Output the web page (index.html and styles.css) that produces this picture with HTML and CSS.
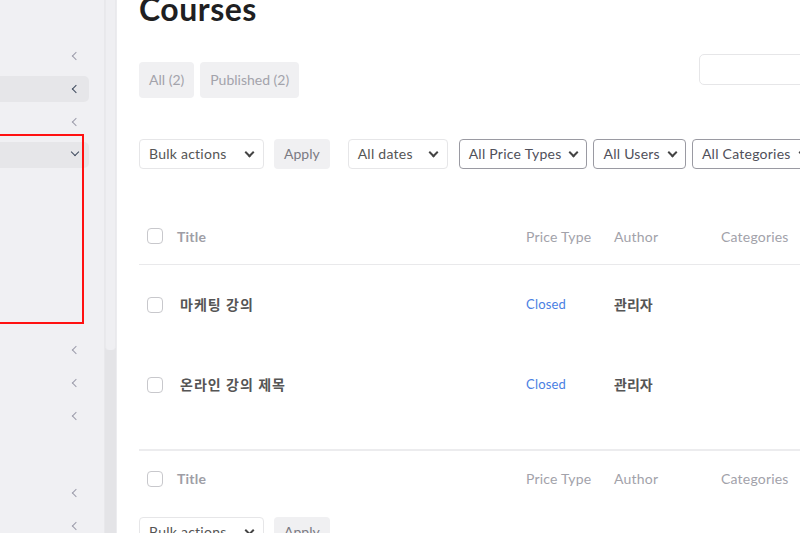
FILE: index.html
```html
<!DOCTYPE html>
<html lang="ko">
<head>
<meta charset="utf-8">
<title>Courses</title>
<link rel="stylesheet" href="styles.css">
</head>
<body>
<aside class="sidebar">
  <nav class="menu">
    <div class="item"><span class="chev"></span></div>
    <div class="item active"><span class="chev dark"></span></div>
    <div class="item"><span class="chev"></span></div>
    <div class="item active open"><span class="chev down"></span></div>
    <div class="submenu"></div>
    <div class="item"><span class="chev"></span></div>
    <div class="item"><span class="chev"></span></div>
    <div class="item"><span class="chev"></span></div>
    <div class="sep"></div>
    <div class="item"><span class="chev"></span></div>
    <div class="item"><span class="chev"></span></div>
  </nav>
  <div class="highlight-box"></div>
</aside>
<div class="scrollbar"><div class="thumb"></div></div>
<main class="content">
  <h1 class="title">Courses</h1>
  <div class="top-row">
    <div class="views">
      <a class="pill">All (2)</a>
      <a class="pill">Published (2)</a>
    </div>
    <div class="search"></div>
  </div>
  <div class="toolbar">
    <div class="select light w-bulk">Bulk actions<span class="dd"></span></div>
    <div class="btn">Apply</div>
    <div class="select light w-dates gap-l">All dates<span class="dd"></span></div>
    <div class="select dark gap-l">All Price Types<span class="dd"></span></div>
    <div class="select dark">All Users<span class="dd"></span></div>
    <div class="select dark">All Categories<span class="dd"></span></div>
  </div>
  <div class="table">
    <div class="row head">
      <div class="c-cb"><span class="cb"></span></div>
      <div class="c-title">Title</div>
      <div class="c-price">Price Type</div>
      <div class="c-author">Author</div>
      <div class="c-cat">Categories</div>
    </div>
    <div class="row body">
      <div class="c-cb"><span class="cb"></span></div>
      <div class="c-title strong ko">마케팅 강의</div>
      <div class="c-price link">Closed</div>
      <div class="c-author strong">관리자</div>
      <div class="c-cat"></div>
    </div>
    <div class="row body">
      <div class="c-cb"><span class="cb"></span></div>
      <div class="c-title strong ko">온라인 강의 제목</div>
      <div class="c-price link">Closed</div>
      <div class="c-author strong">관리자</div>
      <div class="c-cat"></div>
    </div>
    <div class="row head foot">
      <div class="c-cb"><span class="cb"></span></div>
      <div class="c-title">Title</div>
      <div class="c-price">Price Type</div>
      <div class="c-author">Author</div>
      <div class="c-cat">Categories</div>
    </div>
  </div>
  <div class="toolbar bottom">
    <div class="select light w-bulk">Bulk actions<span class="dd"></span></div>
    <div class="btn">Apply</div>
  </div>
</main>
</body>
</html>
```

FILE: styles.css
```css
* { box-sizing: border-box; }
html, body { margin: 0; padding: 0; }
body {
  width: 800px;
  height: 533px;
  overflow: hidden;
  display: flex;
  background: #fff;
  font-family: Lato, "Noto Sans CJK KR", sans-serif;
  color: #555;
}
.sidebar {
  position: relative;
  width: 104px;
  flex: none;
  background: #f0f0f3;
  height: 533px;
}
.menu {
  display: flex;
  flex-direction: column;
  padding-top: 43px;
  width: 89px;
}
.item {
  height: 26px;
  margin-bottom: 7px;
  border-radius: 0 5px 5px 0;
  position: relative;
}
.item.active { background: #e6e6e9; }
.submenu { height: 162px; }
.sep { height: 44px; }
.chev {
  position: absolute;
  right: 10px;
  top: 10px;
  width: 6px;
  height: 6px;
  border-left: 1.5px solid #9c9cab;
  border-bottom: 1.5px solid #9c9cab;
  transform: rotate(45deg);
}
.chev.dark { border-color: #3e4a5e; }
.chev.down {
  transform: rotate(-45deg);
  top: 7px;
  right: 11px;
  border-color: #3e4a5e;
}
.highlight-box {
  position: absolute;
  left: -4px;
  top: 134px;
  width: 88px;
  height: 190px;
  border: 2px solid #ff1010;
}
.scrollbar {
  width: 13px;
  flex: none;
  background: #e4e4e7;
  border-left: 1px solid #e8e8eb;
  border-right: 1px solid #ececef;
}
.thumb {
  height: 350px;
  background: #efeff2;
  border-left: 1px solid #e9e9ec;
  border-right: 1px solid #e9e9ec;
  border-radius: 0 0 4px 4px;
}
.content {
  flex: none;
  width: 700px;
  padding-left: 22px;
}
.title {
  margin: -11px 0 0;
  font-size: 32px;
  line-height: 40px;
  font-weight: 700;
  color: #1f1f22;
  letter-spacing: 0.5px;
}
.top-row {
  display: flex;
  justify-content: space-between;
  align-items: flex-start;
  margin-top: 33px;
  width: 680px;
}
.views { display: flex; gap: 6px; }
.pill {
  height: 36px;
  line-height: 36px;
  padding: 0 10px;
  background: #f0f0f2;
  border-radius: 4px;
  color: #a3a3ab;
  font-size: 14px;
}
.search {
  width: 120px;
  height: 31px;
  margin-top: -8px;
  border: 1px solid #e6e6e8;
  border-radius: 5px;
}
.toolbar {
  display: flex;
  gap: 6px;
  margin-top: 41px;
  height: 30px;
  white-space: nowrap;
}
.select {
  height: 30px;
  line-height: 28px;
  border-radius: 4px;
  padding: 0 10px 0 9px;
  font-size: 14px;
  color: #555;
  display: flex;
  align-items: center;
  justify-content: space-between;
  gap: 12px;
  flex: none;
  letter-spacing: 0.25px;
}
.select.light { border: 1px solid #e6e6e8; }
.select.dark {
  border: 1px solid #9a9aa2;
  gap: 9px;
  padding: 0 9px 0 9px;
  color: #50505a;
}
.w-bulk { width: 125px; }
.w-dates { width: 100px; }
.gap-l { margin-left: 12px; }
.select.dark.gap-l { margin-left: 5px; }
.dd {
  width: 7px;
  height: 7px;
  border-right: 2px solid #444;
  border-bottom: 2px solid #444;
  transform: rotate(45deg);
  margin-top: -4px;
  flex: none;
}
.btn {
  height: 30px;
  line-height: 30px;
  padding: 0 10px;
  margin-left: 4px;
  background: #f0f0f2;
  border-radius: 4px;
  color: #7a7a82;
  font-size: 14px;
}
.table {
  margin-top: 39px;
  margin-left: 0;
  width: 680px;
}
.row {
  display: flex;
  align-items: center;
}
.row.head {
  height: 57px;
  border-bottom: 1px solid #e9e9eb;
  color: #a2a2aa;
  font-size: 14px;
  letter-spacing: 0.2px;
}
.row.body { height: 80px; font-size: 14px; padding-bottom: 2px; }
.row.body + .row.head.foot { margin-top: 24px; }
.row.foot {
  border-bottom: none;
  border-top: 2px solid #ececee;
  height: 57px;
}
.c-cb { width: 38px; padding-left: 8px; display: flex; }
.cb {
  width: 16px;
  height: 16px;
  border: 1px solid #c8c8cc;
  border-radius: 4px;
  background: #fff;
}
.row.body .cb { margin-top: 2px; }
.c-title { width: 349px; }
.row.head .c-title { font-weight: 700; color: #9e9ea6; }
.row.body .c-title { padding-left: 3px; }
.ko { letter-spacing: 1px; }
.c-price { width: 88px; }
.c-author { width: 107px; }
.c-cat { flex: 1; }
.strong { font-weight: 700; color: #555; }
.link { color: #4a7fe3; font-size: 13px; letter-spacing: 0.2px; }
.toolbar.bottom { margin-top: 11px; }
```
